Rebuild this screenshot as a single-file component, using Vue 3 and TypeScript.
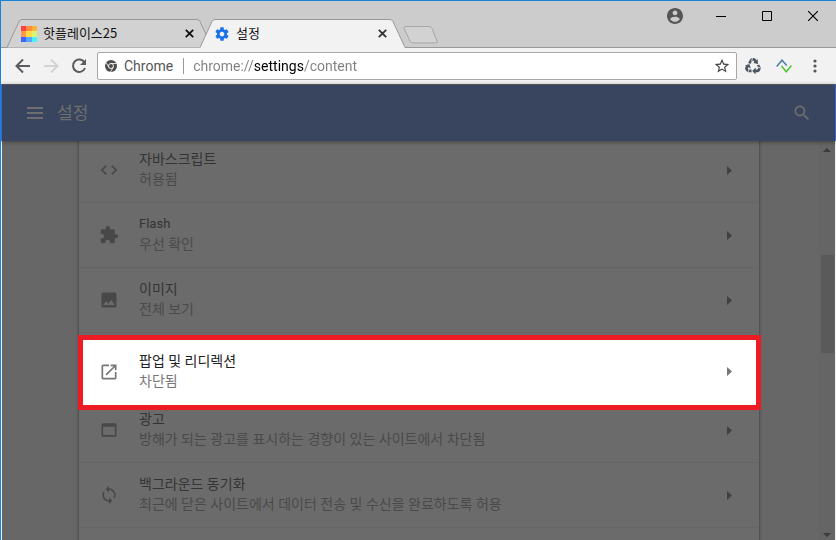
<script setup lang="ts">
import { ref } from 'vue'

interface Row {
  title: string
  detail: string
  icon: string
  latin?: boolean
  active?: boolean
}

const address = ref('chrome://settings/content')

const rows: Row[] = [
  { title: '자바스크립트', detail: '허용됨', icon: 'M9.4 16.6 4.8 12l4.6-4.6L8 6l-6 6 6 6 1.4-1.4zm5.2 0 4.6-4.6-4.6-4.6L16 6l6 6-6 6-1.4-1.4z' },
  { title: 'Flash', detail: '우선 확인', latin: true, icon: 'M20.5 11H19V7c0-1.1-.9-2-2-2h-4V3.500C13 2.120 11.880 1 10.500 1S8 2.120 8 3.500V5H4c-1.100 0-1.990.9-1.990 2v3.800H3.500c1.490 0 2.700 1.210 2.700 2.700s-1.210 2.700-2.700 2.700H2V20c0 1.100.9 2 2 2h3.800v-1.500c0-1.490 1.210-2.700 2.700-2.700 1.490 0 2.700 1.210 2.700 2.700V22H17c1.100 0 2-.9 2-2v-4h1.500c1.380 0 2.500-1.120 2.500-2.500S21.880 11 20.500 11z' },
  { title: '이미지', detail: '전체 보기', icon: 'M21 19V5c0-1.100-.9-2-2-2H5c-1.100 0-2 .9-2 2v14c0 1.100.9 2 2 2h14c1.100 0 2-.9 2-2zM8.500 13.500l2.500 3.010L14.500 12l4.500 6H5l3.500-4.500z' },
  { title: '팝업 및 리디렉션', detail: '차단됨', active: true, icon: 'M19 19H5V5h7V3H5c-1.110 0-2 .9-2 2v14c0 1.100.89 2 2 2h14c1.100 0 2-.9 2-2v-7h-2v7zM14 3v2h3.590l-9.830 9.830 1.410 1.410L19 6.410V10h2V3h-7z' },
  { title: '광고', detail: '방해가 되는 광고를 표시하는 경향이 있는 사이트에서 차단됨', icon: 'M19 4H5c-1.110 0-2 .9-2 2v12c0 1.100.89 2 2 2h14c1.100 0 2-.9 2-2V6c0-1.100-.89-2-2-2zm0 14H5V8h14v10z' },
  { title: '백그라운드 동기화', detail: '최근에 닫은 사이트에서 데이터 전송 및 수신을 완료하도록 허용', icon: 'M12 4V1L8 5l4 4V6c3.310 0 6 2.690 6 6 0 1.010-.25 1.970-.7 2.800l1.460 1.460C19.540 15.030 20 13.570 20 12c0-4.420-3.580-8-8-8zm0 14c-3.310 0-6-2.690-6-6 0-1.010.25-1.970.7-2.800L5.240 7.740C4.460 8.970 4 10.430 4 12c0 4.420 3.580 8 8 8v3l4-4-4-4v3z' },
]

const swatches = ['#ff4040', '#ff8b3d', '#ffb33d', '#ff9a4d', '#ffdb45', '#d8f57a', '#3f63ff', '#5aa5ff', '#45f3ff']
</script>

<template>
  <div class="window">
    <header class="titlebar">
      <div class="tabs" role="tablist">
        <div class="tab" role="tab" aria-selected="false">
          <svg class="shape" viewBox="0 0 205 29"><path d="M0 28.500 L12 2.500 Q13 .5 15 .5 H190 Q192 .5 193 2.500 L205 28.500" fill="#d2d2d2" stroke="#999" /></svg>
          <svg class="favicon" viewBox="0 0 16 16" shape-rendering="crispEdges">
            <rect v-for="(c, i) in swatches" :key="i" :x="[0, 5, 11][i % 3]" :y="[0, 5, 11][Math.floor(i / 3)]" :width="[5, 6, 5][i % 3]" :height="[5, 6, 5][Math.floor(i / 3)]" :fill="c" />
          </svg>
          <span class="tab-title">핫플레이스25</span>
          <button class="tab-close" aria-label="탭 닫기"><svg viewBox="0 0 9 9"><path d="M.8.8l7.400 7.400M8.200.8L.8 8.200" fill="none" stroke="#111" stroke-width="1.800" /></svg></button>
        </div>
        <div class="tab current" role="tab" aria-selected="true">
          <svg class="shape" viewBox="0 0 205 29"><path d="M0 28.500 L12 2.500 Q13 .5 15 .5 H190 Q192 .5 193 2.500 L205 28.500 V29 H0z" fill="#f2f2f2" /><path d="M0 28.500 L12 2.500 Q13 .5 15 .5 H190 Q192 .5 193 2.500 L205 28.500" fill="none" stroke="#999" /></svg>
          <svg class="favicon" viewBox="0 0 24 24"><path fill="#1a73e8" d="M19.430 12.980c.04-.32.07-.64.07-.98s-.03-.66-.07-.98l2.110-1.650c.19-.15.24-.42.12-.64l-2-3.460c-.12-.22-.39-.3-.61-.22l-2.490 1c-.52-.4-1.080-.73-1.690-.98l-.38-2.650C14.460 2.180 14.250 2 14 2h-4c-.25 0-.46.18-.49.42l-.38 2.650c-.61.25-1.170.59-1.690.98l-2.490-1c-.23-.09-.49 0-.61.22l-2 3.460c-.13.22-.07.49.12.64l2.110 1.650c-.04.32-.07.65-.07.98s.03.66.07.98l-2.110 1.650c-.19.15-.24.42-.12.64l2 3.460c.12.22.39.3.61.22l2.490-1c.52.4 1.080.73 1.690.98l.38 2.650c.03.24.24.42.49.42h4c.25 0 .46-.18.49-.42l.38-2.650c.61-.25 1.170-.59 1.690-.98l2.490 1c.23.09.49 0 .61-.22l2-3.460c.12-.22.07-.49-.12-.64l-2.110-1.650zM12 15.500c-1.930 0-3.500-1.570-3.500-3.500s1.570-3.500 3.500-3.500 3.500 1.570 3.500 3.500-1.570 3.500-3.500 3.500z" /></svg>
          <span class="tab-title">설정</span>
          <button class="tab-close" aria-label="탭 닫기"><svg viewBox="0 0 9 9"><path d="M.8.8l7.400 7.400M8.200.8L.8 8.200" fill="none" stroke="#333" stroke-width="1.800" /></svg></button>
        </div>
        <button class="new-tab" aria-label="새 탭"><svg viewBox="0 0 35 18"><path d="M3 .5H26Q28 .5 29 2.500L34 15Q35 17 32.500 17H10Q8 17 7 15L1 2.500Q.5.5 3 .5z" fill="#d2d2d2" stroke="#a6a6a6" /></svg></button>
      </div>
      <div class="controls">
        <button aria-label="사용자"><svg width="16" height="16" viewBox="2 2 20 20"><path fill="#555" d="M12 2C6.480 2 2 6.480 2 12s4.480 10 10 10 10-4.480 10-10S17.520 2 12 2zm0 3c1.660 0 3 1.340 3 3s-1.340 3-3 3-3-1.340-3-3 1.340-3 3-3zm0 14.200c-2.500 0-4.710-1.280-6-3.220.03-1.990 4-3.080 6-3.080 1.990 0 5.970 1.090 6 3.080-1.290 1.940-3.500 3.220-6 3.220z" /></svg></button>
        <button aria-label="최소화"><svg width="10" height="10" viewBox="0 0 10 10"><path d="M0 5.500h10" stroke="#000" /></svg></button>
        <button aria-label="최대화"><svg width="10" height="10" viewBox="0 0 10 10"><path d="M.5.5h9v9h-9z" fill="none" stroke="#000" /></svg></button>
        <button aria-label="닫기"><svg width="10" height="10" viewBox="0 0 10 10"><path d="M0 0l10 10M10 0L0 10" stroke="#000" stroke-width="1.200" /></svg></button>
      </div>
    </header>

    <div class="toolbar">
      <nav class="nav">
        <button aria-label="뒤로"><svg width="16" height="16" viewBox="0 0 16 16"><path d="M15 8H2M8 1.500L1.500 8 8 14.500" fill="none" stroke="#5a5a5f" stroke-width="2" /></svg></button>
        <button aria-label="앞으로" disabled><svg width="16" height="16" viewBox="0 0 16 16"><path d="M1 8h13M8 1.500L14.500 8 8 14.500" fill="none" stroke="#d3d3d5" stroke-width="2" /></svg></button>
        <button aria-label="새로고침"><svg width="16" height="16" viewBox="0 0 16 16"><path d="M13.500 4.500A6.200 6.200 0 1 0 14 10" fill="none" stroke="#5a5a5f" stroke-width="2" /><path d="M15 1v6H9z" fill="#5a5a5f" /></svg></button>
      </nav>
      <div class="omnibox">
        <svg width="12" height="12" viewBox="0 0 12 12"><circle cx="6" cy="6" r="6" fill="#4b4b4b" /><circle cx="6" cy="6" r="2.500" fill="none" stroke="#fff" stroke-width=".9" /><path d="M6 3.500h5.500M3.800 7.300L1.100 2.600M8.200 7.300L5.500 12" stroke="#fff" stroke-width=".8" /></svg>
        <label class="scheme" for="address">Chrome</label>
        <input id="address" v-model="address" class="address" type="text" spellcheck="false">
        <button class="star" aria-label="북마크"><svg width="16" height="16" viewBox="1 1 22 22"><path fill="#444" d="M22 9.240l-7.190-.62L12 2 9.190 8.630 2 9.240l5.460 4.730L5.820 21 12 17.270 18.180 21l-1.630-7.030L22 9.240zM12 15.400l-3.760 2.270 1-4.280-3.320-2.880 4.380-.38L12 6.100l1.710 4.040 4.380.38-3.320 2.880 1 4.280L12 15.400z" /></svg></button>
      </div>
      <div class="extensions">
        <button aria-label="재활용">
          <svg width="16" height="16" viewBox="0 0 16 16">
            <g fill="none" stroke="#4c5562" stroke-width="2.600">
              <path d="M4.300 5.500L6 2.300q.5-.9 1.500-.9h1.200q.8 0 1.300.9l.8 1.500" />
              <path d="M13 7l1.200 2.300q.5 1-.1 2l-.3.700q-.5.900-1.500.9H10" />
              <path d="M6.500 12.900H3.700q-1 0-1.500-.8l-.5-.9q-.5-.8 0-1.700l.7-1.200" />
            </g>
            <g fill="#4c5562"><path d="M8.300 5l4.800.900L12.600 1z" /><path d="M10.600 9.400v7L7.200 12.900z" /><path d="M0 7.500L4.400 6l1.400 4.400z" /></g>
            <path d="M7.500 0l-1 3.500M15.500 10l-3.500-1.200M3 14l1.200-2.600" stroke="#f2f2f2" stroke-width=".8" />
          </svg>
        </button>
        <button aria-label="동기화 확장"><svg width="16" height="14" viewBox="0 0 16 14"><path d="M.7 7.500L6 1.200l4.700 5.300" fill="none" stroke="#4e79ae" stroke-width="1.500" /><path d="M5.500 7l4.800 5.800 5.200-6.300" fill="none" stroke="#4fc52d" stroke-width="1.500" /></svg></button>
        <button aria-label="메뉴"><svg width="4" height="14" viewBox="0 0 4 14" fill="#55555a"><circle cx="2" cy="2" r="1.600" /><circle cx="2" cy="7" r="1.600" /><circle cx="2" cy="12" r="1.600" /></svg></button>
      </div>
    </div>

    <main class="page">
      <div class="appbar">
        <button aria-label="기본 메뉴"><svg width="16" height="12" viewBox="0 0 16 12"><path d="M0 1h16M0 6h16M0 11h16" stroke="#6e6e6e" stroke-width="2" /></svg></button>
        <h1>설정</h1>
        <button class="search" aria-label="설정 검색"><svg width="20" height="20" viewBox="0 0 24 24"><path fill="#6e6e6e" d="M15.500 14h-.79l-.28-.27C15.410 12.590 16 11.110 16 9.500 16 5.910 13.090 3 9.500 3S3 5.910 3 9.500 5.910 16 9.500 16c1.610 0 3.090-.59 4.230-1.570l.27.28v.79l5 4.990L20.490 19l-4.990-5zm-6 0C7.010 14 5 11.990 5 9.500S7.010 5 9.500 5 14 7.010 14 9.500 11.990 14 9.500 14z" /></svg></button>
      </div>
      <div class="body">
        <div class="scroller">
          <ul class="card">
            <li v-for="row in rows" :key="row.title">
              <button class="row" :class="{ active: row.active }">
                <svg class="row-icon" viewBox="0 0 24 24"><path :d="row.icon" /></svg>
                <span class="texts">
                  <span class="title" :class="{ latin: row.latin }">{{ row.title }}</span>
                  <span class="detail">{{ row.detail }}</span>
                </span>
                <svg class="arrow" viewBox="0 0 5 9"><path d="M0 0l5 4.500L0 9z" /></svg>
              </button>
            </li>
          </ul>
        </div>
        <div class="scrollbar">
          <svg width="8" height="4" viewBox="0 0 8 4"><path d="M0 4l4-4 4 4z" fill="#3b3b3b" /></svg>
          <div class="track"><div class="thumb"></div></div>
          <svg width="8" height="4" viewBox="0 0 8 4"><path d="M0 0l4 4 4-4z" fill="#3b3b3b" /></svg>
        </div>
      </div>
    </main>
  </div>
</template>

<style>
body {
  margin: 0;
}
</style>

<style scoped>
* {
  box-sizing: border-box;
}

.window {
  height: 100vh;
  display: flex;
  flex-direction: column;
  overflow: hidden;
  border-top: 1px solid #1b82d9;
  border-left: 1px solid #1b82d9;
  background: #f2f2f2;
  font-family: Roboto, "Noto Sans CJK KR", sans-serif;
}

button {
  display: flex;
  align-items: center;
  justify-content: center;
  padding: 0;
  border: 0;
  background: none;
  font: inherit;
}

.titlebar {
  display: flex;
  justify-content: space-between;
  height: 47px;
  flex: none;
  background: #ccc;
  box-shadow: inset 0 -1px #999;
}

.tabs {
  display: flex;
  align-items: flex-end;
  padding-left: 6px;
}

.tab {
  position: relative;
  display: flex;
  align-items: center;
  width: 205px;
  height: 29px;
  padding: 0 18px 0 14px;
}

.tab + .tab {
  margin-left: -12px;
}

.shape {
  position: absolute;
  inset: 0;
  width: 100%;
  height: 100%;
}

.favicon {
  position: relative;
  width: 16px;
  height: 16px;
}

.tab-title {
  position: relative;
  flex: 1;
  margin-left: 6px;
  padding-bottom: 2px;
  font-family: "Noto Sans CJK KR", sans-serif;
  font-size: 13px;
  line-height: 18px;
  color: #111;
}

.tab-close {
  position: relative;
}

.tab-close svg {
  width: 9px;
  height: 9px;
}

.new-tab {
  align-self: flex-end;
  height: 18px;
  margin: 0 0 4px -2px;
}

.new-tab svg {
  width: 35px;
  height: 18px;
}

.controls {
  display: flex;
}

.controls button {
  width: 46px;
  height: 29px;
}

.toolbar {
  display: flex;
  flex: none;
  height: 36px;
  padding: 0 6px 0 8px;
  align-items: center;
}

.nav,
.extensions {
  display: flex;
}

.nav {
  margin-right: 4px;
}

.nav button {
  width: 28px;
  height: 28px;
}

.extensions button {
  width: 31px;
  height: 28px;
}

.omnibox {
  flex: 1;
  display: flex;
  align-items: center;
  height: 28px;
  padding: 0 6px 0 7px;
  border: 1px solid #a8a8a8;
  border-radius: 2px;
  background: #fff;
  font-size: 14px;
}

.scheme {
  margin-left: 7px;
  padding-right: 10px;
  border-right: 1px solid #999;
  line-height: 16px;
  color: #555;
}

.address {
  flex: 1;
  min-width: 0;
  padding: 0;
  margin-left: 9px;
  border: 0;
  outline: 0;
  font: inherit;
  color: transparent;
  background: linear-gradient(90deg, #808080 61px, #000 61px, #000 111px, #808080 111px);
  background-clip: text;
  -webkit-background-clip: text;
}

.page {
  flex: 1;
  min-height: 0;
  display: flex;
  flex-direction: column;
  margin: 0 1px;
  background: #676767;
}

.appbar {
  position: relative;
  display: flex;
  align-items: center;
  flex: none;
  height: 57px;
  margin: 0 -1px;
  padding: 0 23px 0 25px;
  border: solid #3367d6;
  border-width: 0 1px;
  background: #39455f;
  box-shadow: 0 1px 4px rgba(0, 0, 0, 0.4), inset 0 1px #555;
}

.appbar h1 {
  flex: 1;
  margin: 0 0 0 14px;
  font-size: 17px;
  line-height: 24px;
  font-weight: 400;
  color: #6e6e6e;
}

.body {
  flex: 1;
  min-height: 0;
  display: flex;
}

.scroller {
  flex: 1;
  overflow: hidden;
  padding: 0 60px 0 77px;
}

.card {
  min-height: 100%;
  margin: -3px 0 0;
  padding: 0 0 16px;
  list-style: none;
  background: #6b6b6b;
  box-shadow: 0 0 3px rgba(0, 0, 0, 0.5);
}

.card li {
  position: relative;
  height: 65px;
  border-bottom: 1px solid #666;
}

.row {
  width: 100%;
  height: 64px;
  padding: 0 27px 0 20px;
  text-align: left;
}

.row-icon {
  width: 20px;
  height: 20px;
  margin-right: 20px;
  fill: #484848;
}

.texts {
  flex: 1;
  display: flex;
  flex-direction: column;
  padding-bottom: 2px;
  font-size: 14px;
  line-height: 20px;
}

.title {
  color: #343434;
}

.latin {
  font-size: 13px;
}

.detail {
  color: #4a4a4a;
}

.arrow {
  width: 5px;
  height: 9px;
  fill: #404040;
}

.row.active {
  position: absolute;
  z-index: 1;
  inset: 2px -2px auto -1px;
  width: auto;
  height: 75px;
  padding: 0 24px 2px 16px;
  border: 5px solid #ed1c24;
  background: #fff;
}

.active .title {
  color: #222;
}

.active .detail {
  color: #777;
}

.active .row-icon,
.active .arrow {
  fill: #757575;
}

.scrollbar {
  width: 16px;
  display: flex;
  flex-direction: column;
  align-items: center;
  padding: 7px 0 3px;
  background: #656565;
}

.track {
  flex: 1;
  align-self: stretch;
  display: flex;
  flex-direction: column;
  padding: 103px 1px 0 2px;
}

.thumb {
  height: 98px;
  background: #5a5a5a;
}
</style>
